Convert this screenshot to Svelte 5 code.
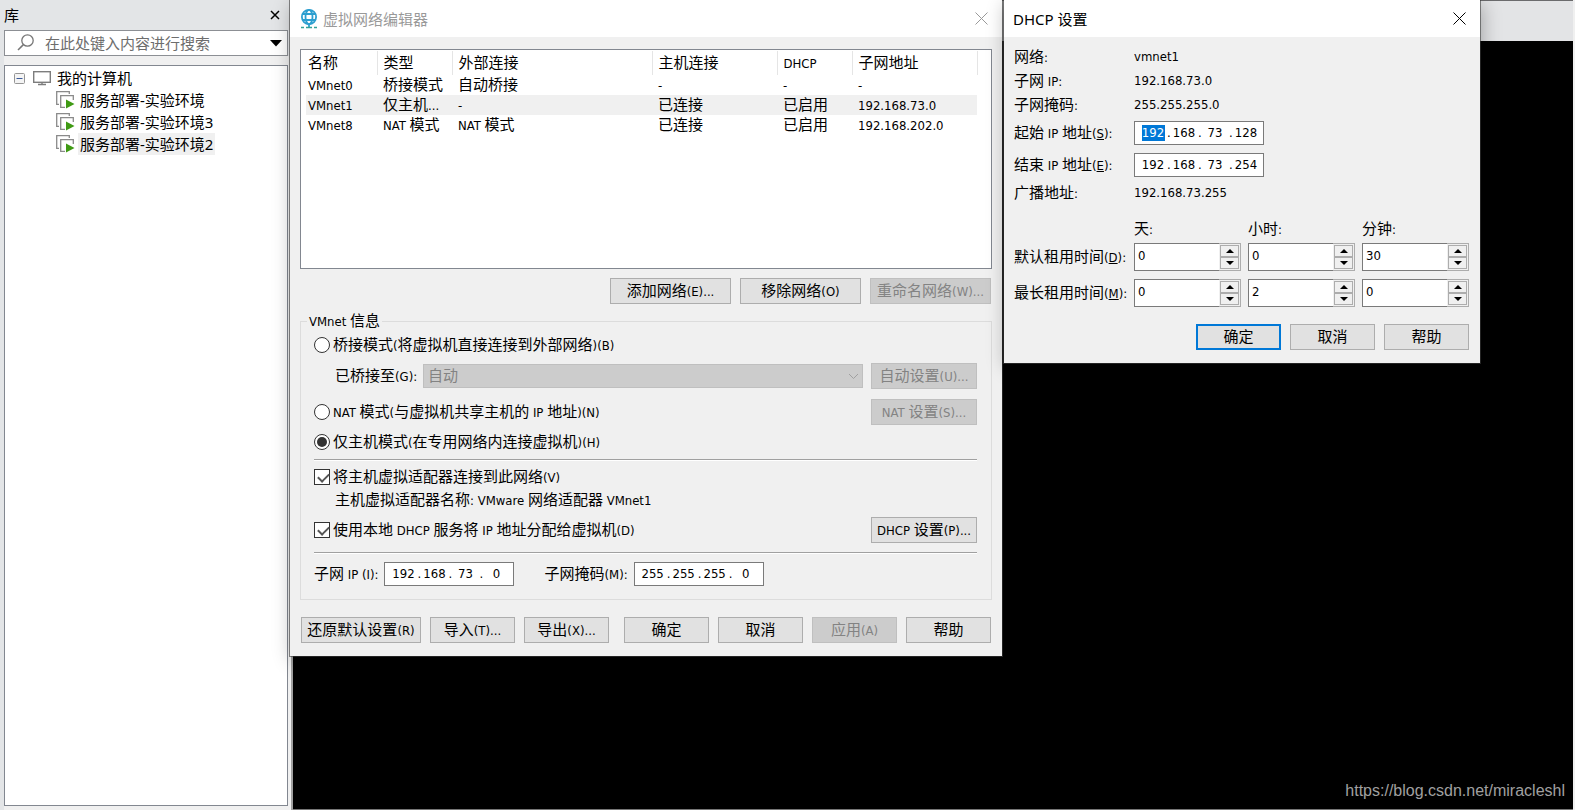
<script lang="ts">
	const machines = ['服务部署-实验环境', '服务部署-实验环境3', '服务部署-实验环境2']
	let activeMachine = $state(2)
	let search = $state('')

	const columns = ['名称', '类型', '外部连接', '主机连接', 'DHCP', '子网地址']
	const networks = [
		['VMnet0', '桥接模式', '自动桥接', '-', '-', '-'],
		['VMnet1', '仅主机...', '-', '已连接', '已启用', '192.168.73.0'],
		['VMnet8', 'NAT 模式', 'NAT 模式', '已连接', '已启用', '192.168.202.0']
	]
	let activeNetwork = $state(1)

	let mode = $state('host')
	let connectAdapter = $state(true)
	let useDhcp = $state(true)
	let subnetIp = $state(['192', '168', '73', '0'])
	let subnetMask = $state(['255', '255', '255', '0'])

	let startIp = $state(['192', '168', '73', '128'])
	let endIp = $state(['192', '168', '73', '254'])
	const units = ['天:', '小时:', '分钟:']
	let leases = $state([
		{ id: 'default', label: '默认租用时间', key: 'D', values: [0, 0, 30] },
		{ id: 'max', label: '最长租用时间', key: 'M', values: [0, 2, 0] }
	])

	// latin runs are set smaller than the chinese text around them
	function runs(text: string) {
		return text.split(/([ -~]+)/).filter(Boolean)
	}

	function step(row: number, col: number, delta: number) {
		leases[row].values[col] = Math.max(0, leases[row].values[col] + delta)
	}
</script>

{#snippet mixed(text)}<span>{#each runs(text) as part}{#if /^[ -~]/.test(part)}<span class="latin">{part}</span>{:else}{part}{/if}{/each}</span>{/snippet}

{#snippet keyLabel(text, key)}<span>{@render mixed(text)}<span class="latin">(<u>{key}</u>):</span></span>{/snippet}

{#snippet ipField(parts, name, selected)}
	<div class="ip" role="group" aria-label={name}>
		{#each parts as _, i}
			{#if i > 0}<span class="dot">.</span>{/if}
			<span class="octet">
				<input class:selected={selected && i === 0} type="text" maxlength="3" aria-label={`${name} ${i + 1}`} bind:value={parts[i]} />
			</span>
		{/each}
	</div>
{/snippet}

{#snippet closeIcon()}
	<svg width="13" height="13" viewBox="0 0 13 13" aria-hidden="true"><path d="M.5 .5 12.5 12.5M12.5 .5 .5 12.5" stroke="currentColor" fill="none" /></svg>
{/snippet}

<div class="desktop">
	<aside class="library">
		<header>
			<h2>库</h2>
			<button class="plain" aria-label="关闭">
				<svg width="10" height="10" viewBox="0 0 10 10"><path d="M1 1 9 9M9 1 1 9" stroke="#000" stroke-width="1.5" fill="none" /></svg>
			</button>
		</header>
		<div class="search">
			<svg width="18" height="18" viewBox="0 0 18 18" aria-hidden="true">
				<circle cx="10.5" cy="6.5" r="5.7" fill="none" stroke="#777" stroke-width="1.3" />
				<path d="M6.4 10.6 1 16" stroke="#777" stroke-width="1.5" />
			</svg>
			<input type="text" placeholder="在此处键入内容进行搜索" aria-label="搜索" bind:value={search} />
			<button class="plain" aria-label="搜索选项">
				<svg width="12" height="7" viewBox="0 0 12 7"><path d="M0 0h12L6 6.5z" /></svg>
			</button>
		</div>
		<div class="tree">
			<div class="root">
				<svg width="11" height="11" viewBox="0 0 11 11" aria-hidden="true">
					<rect x=".5" y=".5" width="10" height="10" rx="1" fill="#f4f4f4" stroke="#959595" />
					<path d="M2.5 5.5h6" stroke="#3b5a9a" />
				</svg>
				<svg width="18" height="15" viewBox="0 0 18 15" aria-hidden="true">
					<rect x=".7" y=".7" width="16.6" height="10.6" fill="#fff" stroke="#7d7d7d" stroke-width="1.4" />
					<path d="M9 11v3M5 13.5h8" stroke="#7d7d7d" stroke-width="1.4" />
				</svg>
				<span>我的计算机</span>
			</div>
			<ul>
				{#each machines as machine, i}
					<li>
						<svg width="19" height="18" viewBox="0 0 19 18" aria-hidden="true">
							<path d="M3 13.3H.7V.7h12.6V3" fill="none" stroke="#8a8a8a" stroke-width="1.3" />
							<path d="M9 16.3H4.7V4.7h12.6V9" fill="none" stroke="#8a8a8a" stroke-width="1.3" />
							<path d="M10 8.5v9l8.5-4.5z" fill="#3f9a14" />
						</svg>
						<button class="machine" class:active={i === activeMachine} onclick={() => (activeMachine = i)}>{machine}</button>
					</li>
				{/each}
			</ul>
		</div>
	</aside>

	<main class="workspace">
		<div class="toolbar"></div>
		<div class="console">
			<a href="https://blog.csdn.net/miracleshl">https://blog.csdn.net/miracleshl</a>
		</div>
	</main>

	<section class="window editor" aria-label="虚拟网络编辑器">
		<header class="titlebar inactive">
			<svg width="18" height="20" viewBox="0 0 18 20" aria-hidden="true">
				<g fill="none" stroke="#2d9fd0" stroke-width="1.8">
					<circle cx="9" cy="8" r="7.1" />
					<ellipse cx="9" cy="8" rx="3.5" ry="7.1" />
					<path d="M2.5 5h13M2.5 11h13M9 15v3" />
				</g>
				<path d="M1 18.5h3M6 18.5h6M14 18.5h3" stroke="#33a398" stroke-width="1.5" />
			</svg>
			<h1>虚拟网络编辑器</h1>
			<button class="plain" aria-label="关闭">{@render closeIcon()}</button>
		</header>

		<div class="content">
			<div class="list">
				<table>
					<colgroup>
						<col class="c1" /><col class="c2" /><col class="c3" /><col class="c4" /><col class="c2" /><col class="c4" />
					</colgroup>
					<thead>
						<tr>
							{#each columns as column}
								<th>{@render mixed(column)}</th>
							{/each}
						</tr>
					</thead>
					<tbody>
						{#each networks as row, i}
							<tr class:active={i === activeNetwork} onclick={() => (activeNetwork = i)}>
								{#each row as cell}
									<td>{@render mixed(cell)}</td>
								{/each}
							</tr>
						{/each}
					</tbody>
				</table>
			</div>

			<div class="buttons list-actions">
				<button>{@render mixed('添加网络(E)...')}</button>
				<button>{@render mixed('移除网络(O)')}</button>
				<button disabled>{@render mixed('重命名网络(W)...')}</button>
			</div>

			<fieldset>
				<legend>{@render mixed('VMnet 信息')}</legend>

				<label class="choice">
					<input type="radio" value="bridge" bind:group={mode} />
					{@render mixed('桥接模式(将虚拟机直接连接到外部网络)(B)')}
				</label>
				<div class="line bridged">
					<label for="bridge-to">{@render mixed('已桥接至(G):')}</label>
					<div class="dropdown">
						<select id="bridge-to" disabled>
							<option>自动</option>
						</select>
						<svg width="11" height="7" viewBox="0 0 11 7" aria-hidden="true"><path d="M1 1l4.5 4.5L10 1" fill="none" stroke="#a0a0a0" /></svg>
					</div>
					<button class="side" disabled>{@render mixed('自动设置(U)...')}</button>
				</div>
				<div class="line nat">
					<label class="choice">
						<input type="radio" value="nat" bind:group={mode} />
						{@render mixed('NAT 模式(与虚拟机共享主机的 IP 地址)(N)')}
					</label>
					<button class="side" disabled>{@render mixed('NAT 设置(S)...')}</button>
				</div>
				<label class="choice host">
					<input type="radio" value="host" bind:group={mode} />
					{@render mixed('仅主机模式(在专用网络内连接虚拟机)(H)')}
				</label>

				<hr />

				<label class="choice">
					<input type="checkbox" bind:checked={connectAdapter} />
					{@render mixed('将主机虚拟适配器连接到此网络(V)')}
				</label>
				<p class="adapter">{@render mixed('主机虚拟适配器名称: VMware 网络适配器 VMnet1')}</p>
				<div class="line dhcp-line">
					<label class="choice">
						<input type="checkbox" bind:checked={useDhcp} />
						{@render mixed('使用本地 DHCP 服务将 IP 地址分配给虚拟机(D)')}
					</label>
					<button class="side">{@render mixed('DHCP 设置(P)...')}</button>
				</div>

				<hr />

				<div class="line subnet">
					<div class="pair">{@render mixed('子网 IP (I):')}{@render ipField(subnetIp, '子网 IP', false)}</div>
					<div class="pair">{@render mixed('子网掩码(M):')}{@render ipField(subnetMask, '子网掩码', false)}</div>
				</div>
			</fieldset>

			<div class="footer">
				<div class="buttons">
					<button class="restore">{@render mixed('还原默认设置(R)')}</button>
					<button>{@render mixed('导入(T)...')}</button>
					<button>{@render mixed('导出(X)...')}</button>
				</div>
				<div class="buttons">
					<button>确定</button>
					<button>取消</button>
					<button disabled>{@render mixed('应用(A)')}</button>
					<button>帮助</button>
				</div>
			</div>
		</div>
	</section>

	<section class="window dhcp" aria-label="DHCP 设置">
		<header class="titlebar">
			<h1>DHCP 设置</h1>
			<button class="plain" aria-label="关闭">{@render closeIcon()}</button>
		</header>
		<div class="content">
			<dl>
				<dt>{@render mixed('网络:')}</dt>
				<dd>vmnet1</dd>
				<dt>{@render mixed('子网 IP:')}</dt>
				<dd>192.168.73.0</dd>
				<dt>{@render mixed('子网掩码:')}</dt>
				<dd>255.255.255.0</dd>
			</dl>
			<div class="range">
				{@render keyLabel('起始 IP 地址', 'S')}
				{@render ipField(startIp, '起始 IP 地址', true)}
				{@render keyLabel('结束 IP 地址', 'E')}
				{@render ipField(endIp, '结束 IP 地址', false)}
			</div>
			<dl>
				<dt>{@render mixed('广播地址:')}</dt>
				<dd>192.168.73.255</dd>
			</dl>

			<div class="lease units">
				<span></span>
				{#each units as unit}
					{@render mixed(unit)}
				{/each}
			</div>
			{#each leases as lease, r}
				<div class="lease">
					<label for={`${lease.id}-0`}>{@render keyLabel(lease.label, lease.key)}</label>
					{#each lease.values as _, c}
						<div class="spinner">
							<input id={`${lease.id}-${c}`} type="number" min="0" aria-label={`${lease.label} ${units[c]}`} bind:value={lease.values[c]} />
							<div class="steps">
								<button aria-label="增加" onclick={() => step(r, c, 1)}>
									<svg width="8" height="4" viewBox="0 0 8 4"><path d="M0 4h8L4 0z" /></svg>
								</button>
								<button aria-label="减少" onclick={() => step(r, c, -1)}>
									<svg width="8" height="4" viewBox="0 0 8 4"><path d="M0 0h8L4 4z" /></svg>
								</button>
							</div>
						</div>
					{/each}
				</div>
			{/each}

			<div class="buttons">
				<button class="primary">确定</button>
				<button>取消</button>
				<button>帮助</button>
			</div>
		</div>
	</section>
</div>

<style>
:global(body) {
	margin: 0;
	background: #f0f0f0;
}

.desktop {
	position: relative;
	display: flex;
	min-height: 100vh;
	box-sizing: border-box;
	padding-right: 2px;
	overflow: hidden;
	background: #f0f0f0;
	color: #000;
	font: 15px/20px "DejaVu Sans Condensed", "Noto Sans CJK SC", sans-serif;
}

.desktop :global(*) {
	box-sizing: border-box;
}

h1,
h2 {
	margin: 0;
	font-size: 15px;
	font-weight: normal;
}

button,
input,
select {
	font: inherit;
	color: inherit;
}

.latin {
	font-size: 13px;
}

.plain {
	display: flex;
	border: 0;
	padding: 0;
	background: none;
}

/* library panel */
.library {
	display: flex;
	flex-direction: column;
	flex: none;
	width: 293px;
	padding: 0 3px 4px 4px;
	border-right: 2px solid #a0a0a0;
	background: linear-gradient(#f0f0f0, #f0f0f0) 4px 56px no-repeat, #e3e5e7;
	font-family: "Noto Sans", "Noto Sans CJK SC", sans-serif;
}

.library header {
	display: flex;
	align-items: center;
	justify-content: space-between;
	height: 30px;
	padding-right: 8px;
}

.search {
	display: flex;
	align-items: center;
	gap: 10px;
	height: 26px;
	padding: 0 5px 0 12px;
	border: 1px solid #8c8f94;
	background: #fff;
}

.search input {
	flex: 1;
	min-width: 0;
	border: 0;
	padding: 0;
	background: none;
	outline: none;
}

.search input::placeholder {
	color: #6d6d6d;
	opacity: 1;
}

.tree {
	flex: 1;
	margin-top: 9px;
	padding: 1px 9px;
	border: 1px solid #828790;
	background: #fff;
}

.root {
	display: flex;
	align-items: center;
	height: 22px;
	gap: 8px;
}

.root span {
	margin-left: -2px;
}

.tree ul {
	margin: 0;
	padding: 0 0 0 42px;
	list-style: none;
}

.tree li {
	display: flex;
	align-items: center;
	gap: 3px;
	height: 22px;
}

.machine {
	height: 22px;
	padding: 0 2px;
	border: 0;
	background: none;
	line-height: 20px;
}

.machine.active {
	background: #f0f0f0;
}

/* right side */
.workspace {
	display: flex;
	flex: 1;
	flex-direction: column;
	border-top: 1px solid #6b6b6d;
	border-bottom: 1px solid #777;
}

.toolbar {
	height: 40px;
	background: #e3e4e6;
}

.console {
	display: flex;
	flex: 1;
	align-items: flex-end;
	justify-content: flex-end;
	padding: 8px;
	background: #000;
}

.console a {
	color: #a0a0a0;
	font: 16px/20px "Liberation Sans", sans-serif;
	text-decoration: none;
}

/* windows */
.window {
	position: absolute;
	top: 0;
	background: #f0f0f0;
	box-shadow: 0 0 0 1px rgba(60, 60, 60, 0.6), 2px 4px 18px rgba(0, 0, 0, 0.3);
}

.editor {
	left: 290px;
	width: 712px;
}

.dhcp {
	left: 1004px;
	width: 476px;
}

.titlebar {
	display: flex;
	align-items: center;
	height: 37px;
	padding: 0 14px 0 10px;
	background: #fff;
}

.dhcp .titlebar {
	padding-left: 9px;
}

.titlebar h1 {
	flex: 1;
	font-family: "Noto Sans", "Noto Sans CJK SC", sans-serif;
}

.titlebar svg + h1 {
	margin-left: 5px;
}

.titlebar.inactive {
	color: #999;
}

.buttons {
	display: flex;
	gap: 9px;
}

.buttons button,
.side {
	height: 26px;
	min-width: 85px;
	padding: 0 2px;
	border: 1px solid #adadad;
	background: #e1e1e1;
	line-height: 20px;
	white-space: nowrap;
}

.buttons button:disabled,
.side:disabled {
	border-color: #bfbfbf;
	background: #ccc;
	color: #838383;
}

.buttons .primary {
	border: 2px solid #0078d7;
}

/* network editor */
.editor .content {
	padding: 12px 10px 13px;
}

.list {
	height: 220px;
	padding: 1px 5px;
	border: 1px solid #828790;
	background: #fff;
}

table {
	border-collapse: collapse;
	table-layout: fixed;
	width: 671px;
}

.c1 {
	width: 71px;
}

.c2 {
	width: 75px;
}

.c3 {
	width: 200px;
}

.c4 {
	width: 125px;
}

th,
td {
	height: 20px;
	padding: 0 0 0 6px;
	font-weight: normal;
	line-height: 18px;
	text-align: left;
	white-space: nowrap;
}

th {
	height: 24px;
	border-right: 1px solid #e5e5e5;
}

th:first-child,
td:first-child {
	padding-left: 2px;
}

tr.active {
	background: #f0f0f0;
}

.list-actions {
	justify-content: flex-end;
	margin: 9px 1px 7px;
}

.list-actions button {
	width: 121px;
}

fieldset {
	min-width: 0;
	margin: 0;
	padding: 2px 14px 13px 13px;
	border: 1px solid #dcdcdc;
}

legend {
	height: 20px;
	margin-left: -7px;
	padding: 0 2px;
}

.choice {
	display: flex;
	align-items: center;
	gap: 3px;
	height: 24px;
}

.choice input {
	position: relative;
	flex: none;
	width: 16px;
	height: 16px;
	margin: 0;
	border: 1px solid #333;
	background: #fff;
	appearance: none;
}

.choice input[type="radio"] {
	border-radius: 50%;
}

.choice input[type="radio"]:checked::before {
	content: "";
	position: absolute;
	inset: 2px;
	border-radius: 50%;
	background: #333;
}

.choice input[type="checkbox"]:checked::before {
	content: "";
	position: absolute;
	left: 5px;
	top: 1px;
	width: 5px;
	height: 9px;
	border: solid #555;
	border-width: 0 2px 2px 0;
	transform: rotate(45deg);
}

.line {
	display: flex;
	align-items: center;
	justify-content: space-between;
}

.side {
	width: 106px;
}

.bridged {
	gap: 8px;
	margin-top: 6px;
	padding-left: 21px;
}

.bridged label {
	flex: none;
	width: 80px;
	white-space: nowrap;
}

.dropdown {
	position: relative;
	flex: 1;
}

.dropdown select {
	display: block;
	width: 100%;
	height: 24px;
	padding: 0 4px;
	border: 1px solid #bfbfbf;
	border-radius: 0;
	background: #ccc;
	color: #838383;
	opacity: 1;
	appearance: none;
}

.dropdown svg {
	position: absolute;
	right: 4px;
	top: 9px;
}

.nat {
	margin-top: 10px;
}

.host {
	margin-top: 5px;
}

hr {
	height: 2px;
	margin: 5px 0 4px;
	border: 0;
	border-top: 1px solid #a0a0a0;
	background: #fff;
}

.adapter {
	height: 22px;
	margin: 0 0 6px;
	padding-left: 21px;
	line-height: 22px;
}

.dhcp-line + hr {
	margin: 9px 0 8px;
}

.subnet {
	justify-content: flex-start;
	gap: 30px;
}

.pair {
	display: flex;
	align-items: center;
	gap: 6px;
}

.ip {
	display: flex;
	align-items: center;
	width: 130px;
	height: 24px;
	padding-left: 4px;
	border: 1px solid #7a7a7a;
	background: #fff;
	font-size: 13px;
}

.octet {
	display: flex;
	justify-content: center;
	width: 28px;
}

.octet input {
	width: 28px;
	height: 16px;
	padding: 0;
	border: 0;
	background: none;
	text-align: center;
	outline: none;
}

.octet .selected {
	width: 23px;
	background: #0078d7;
	color: #fff;
}

.dot {
	width: 3px;
}

.footer {
	display: flex;
	justify-content: space-between;
	margin: 17px 1px 0;
}

.footer .restore {
	width: 120px;
}

/* dhcp window */
.dhcp .content {
	padding: 8px 11px 13px 10px;
}

dl,
.range {
	display: grid;
	grid-template-columns: 120px 1fr;
	grid-auto-rows: 24px;
	align-items: center;
	margin: 0;
	line-height: 22px;
}

dd {
	margin: 0;
	font-size: 13px;
}

.range {
	row-gap: 8px;
	margin: 4px 0;
}

.lease {
	display: grid;
	grid-template-columns: 113px repeat(3, minmax(0, 1fr));
	align-items: center;
	column-gap: 7px;
	margin-bottom: 8px;
	white-space: nowrap;
}

.units {
	height: 24px;
	margin: 12px 0 2px;
}

.spinner {
	display: flex;
	height: 28px;
	border: 1px solid #7a7a7a;
	background: #fff;
	font-size: 13px;
}

.spinner input {
	flex: 1;
	min-width: 0;
	height: 22px;
	padding: 0 3px;
	border: 0;
	background: none;
	outline: none;
	appearance: textfield;
}

.spinner input::-webkit-inner-spin-button {
	display: none;
}

.steps {
	display: flex;
	flex: none;
	flex-direction: column;
	width: 22px;
	margin: -1px;
	padding: 1px;
	border: 1px solid #adadad;
	border-left: 0;
	background: #f0f0f0;
}

.steps button {
	display: flex;
	flex: 1;
	align-items: center;
	justify-content: center;
	min-height: 0;
	padding: 0;
	border: 1px solid #adadad;
	background: #f0f0f0;
}

.dhcp .buttons {
	justify-content: flex-end;
	margin-top: 17px;
}
</style>
